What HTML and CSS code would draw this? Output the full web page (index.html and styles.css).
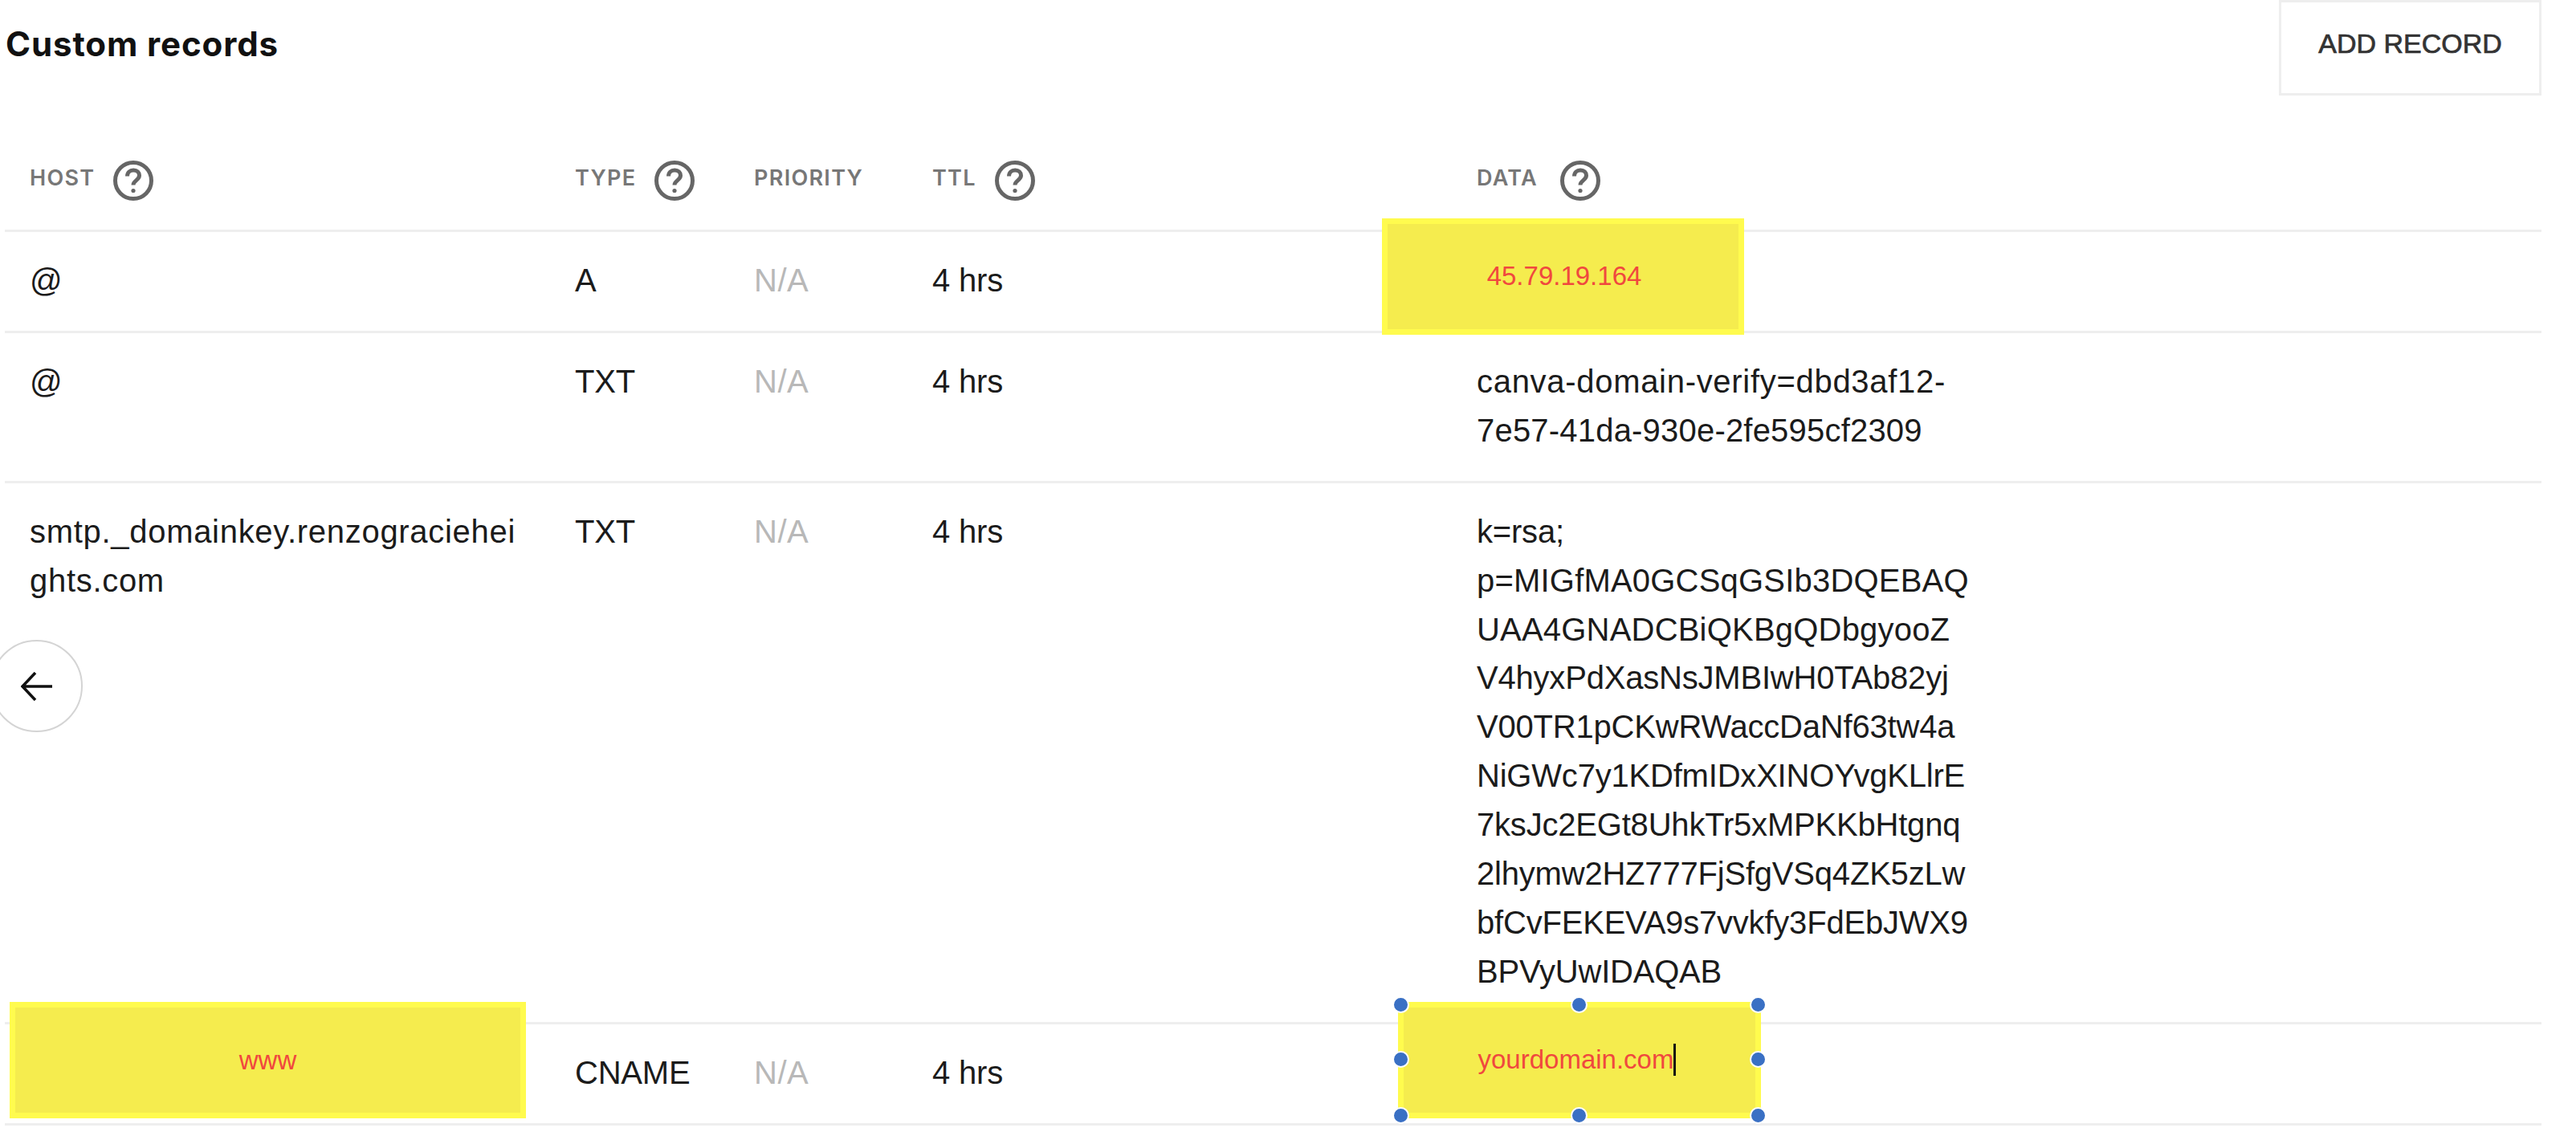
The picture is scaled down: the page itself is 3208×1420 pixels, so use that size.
FILE: index.html
```html
<!DOCTYPE html>
<html lang="en">
<head>
<meta charset="utf-8">
<title>Custom records</title>
<link rel="stylesheet" href="styles.css">
</head>
<body>
<main class="page">
  <header class="top">
    <h1 class="title">Custom records</h1>
    <button class="add">ADD RECORD</button>
  </header>
  <div class="table">
    <div class="row head">
      <div class="label">HOST <svg class="help" viewBox="0 0 50 50"><circle cx="25" cy="25" r="22.5"/><path d="M17.5 19.5c0-4.5 3.3-7.5 7.7-7.5s7.3 2.8 7.3 6.6c0 5.9-7.5 6.2-7.5 12"/><circle class="dot" cx="25" cy="37.5" r="2.6"/></svg></div>
      <div class="label">TYPE <svg class="help" viewBox="0 0 50 50"><circle cx="25" cy="25" r="22.5"/><path d="M17.5 19.5c0-4.5 3.3-7.5 7.7-7.5s7.3 2.8 7.3 6.6c0 5.9-7.5 6.2-7.5 12"/><circle class="dot" cx="25" cy="37.5" r="2.6"/></svg></div>
      <div class="label">PRIORITY</div>
      <div class="label">TTL <svg class="help" viewBox="0 0 50 50"><circle cx="25" cy="25" r="22.5"/><path d="M17.5 19.5c0-4.5 3.3-7.5 7.7-7.5s7.3 2.8 7.3 6.6c0 5.9-7.5 6.2-7.5 12"/><circle class="dot" cx="25" cy="37.5" r="2.6"/></svg></div>
      <div class="label label-data">DATA <svg class="help" viewBox="0 0 50 50"><circle cx="25" cy="25" r="22.5"/><path d="M17.5 19.5c0-4.5 3.3-7.5 7.7-7.5s7.3 2.8 7.3 6.6c0 5.9-7.5 6.2-7.5 12"/><circle class="dot" cx="25" cy="37.5" r="2.6"/></svg></div>
    </div>
    <div class="row">
      <div>@</div><div>A</div><div class="na">N/A</div><div>4 hrs</div><div></div>
    </div>
    <div class="row">
      <div>@</div><div>TXT</div><div class="na">N/A</div><div>4 hrs</div>
      <div><span class="loose">canva-domain-verify=dbd3af12-</span><br><span class="mid">7e57-41da-930e-2fe595cf2309</span></div>
    </div>
    <div class="row">
      <div class="loose">smtp._domainkey.renzograciehei<br>ghts.com</div><div>TXT</div><div class="na">N/A</div><div>4 hrs</div>
      <div>k=rsa;<br><span class="mid">p=MIGfMA0GCSqGSIb3DQEBAQ</span><br><span class="mid">UAA4GNADCBiQKBgQDbgyooZ</span><br>V4hyxPdXasNsJMBIwH0TAb82yj<br>V00TR1pCKwRWaccDaNf63tw4a<br>NiGWc7y1KDfmIDxXINOYvgKLlrE<br>7ksJc2EGt8UhkTr5xMPKKbHtgnq<br>2lhymw2HZ777FjSfgVSq4ZK5zLw<br>bfCvFEKEVA9s7vvkfy3FdEbJWX9<br>BPVyUwIDAQAB</div>
    </div>
    <div class="row">
      <div></div><div>CNAME</div><div class="na">N/A</div><div>4 hrs</div><div></div>
    </div>
  </div>

  <div class="mark mark-ip">45.79.19.164</div>
  <div class="mark mark-www">www</div>
  <div class="mark mark-domain">
    <span class="typed">yourdomain.com</span>
    <i class="handle h-tl"></i><i class="handle h-tm"></i><i class="handle h-tr"></i>
    <i class="handle h-ml"></i><i class="handle h-mr"></i>
    <i class="handle h-bl"></i><i class="handle h-bm"></i><i class="handle h-br"></i>
  </div>

  <button class="back" aria-label="Back">
    <svg viewBox="0 0 40 36" class="arrow"><path d="M39 18H2M18 1 2 18l16 17"/></svg>
  </button>
</main>
</body>
</html>
```

FILE: styles.css
```css
* { box-sizing: border-box; }
html, body { margin: 0; padding: 0; background: #fff; }
body { width: 3208px; height: 1420px; overflow: hidden; }
.page {
  position: relative;
  width: 3208px;
  height: 1420px;
  overflow: hidden;
  font-family: "Liberation Sans", Arial, sans-serif;
  color: #1b1b1b;
}
.top {
  display: flex;
  justify-content: space-between;
  align-items: flex-start;
  height: 118px;
  padding: 0 43px 0 7px;
}
.title {
  margin: 0;
  padding-top: 32px;
  font: 700 42px/46px Inter, sans-serif;
  color: #111;
  letter-spacing: 0.9px;
}
.add {
  width: 327px;
  height: 119px;
  margin: 0;
  padding: 0 0 12px;
  background: #fff;
  border: 3px solid #eeeeee;
  font: 400 34px/40px "Liberation Sans", sans-serif;
  -webkit-text-stroke: 0.7px #333;
  color: #333;
}
.table {
  width: 3159px;
  margin-left: 6px;
}
.row {
  display: grid;
  grid-template-columns: 679px 223px 222px 678px 1fr;
  padding: 30px 0 32px 31px;
  border-bottom: 3px solid #eeeeee;
  font-size: 40px;
  line-height: 60.9px;
  letter-spacing: -0.2px;
}
.row.head {
  height: 171px;
  padding: 80px 0 0 31px;
  line-height: 50px;
}
.loose { letter-spacing: 0.7px; }
.mid { letter-spacing: 0.2px; }
.label {
  display: flex;
  align-items: flex-start;
  gap: 23px;
  height: 50px;
  font: 600 27px/48px Inter, sans-serif;
  letter-spacing: 1.3px;
  color: #777;
}
.label-data { gap: 28px; }
.help { width: 50px; height: 50px; flex: none; margin-top: 2px; fill: none; stroke: #666; stroke-width: 5; }
.help .dot { fill: #666; stroke: none; }
.na { color: #b8b8b8; letter-spacing: 0.5px; }

.mark {
  position: absolute;
  display: flex;
  align-items: center;
  justify-content: center;
  height: 145px;
  background: #f5ec4e;
  border: 7px solid #fffb4e;
  color: #f0483e;
  font-size: 33px;
  line-height: 40px;
}
.mark-ip { left: 1721px; top: 272px; width: 451px; padding: 0 0 2px 3px; }
.mark-www { left: 12px; top: 1248px; width: 643px; }
.mark-domain { left: 1741px; top: 1248px; width: 452px; padding: 0 6px 2px 0; }
.typed { border-right: 3px solid #111; line-height: 40px; }
.handle {
  position: absolute;
  width: 21px;
  height: 21px;
  border-radius: 50%;
  background: #3a70c4;
  border: 2px solid #fff;
}
.h-tl { left: -14px; top: -14px; }
.h-tm { left: 208px; top: -14px; }
.h-tr { left: 431px; top: -14px; }
.h-ml { left: -14px; top: 54px; }
.h-mr { left: 431px; top: 54px; }
.h-bl { left: -14px; top: 124px; }
.h-bm { left: 208px; top: 124px; }
.h-br { left: 431px; top: 124px; }

.back {
  position: absolute;
  left: -12px;
  top: 797px;
  width: 115px;
  height: 115px;
  padding: 0;
  display: flex;
  align-items: center;
  justify-content: center;
  background: #fff;
  border: 2px solid #d4d4d4;
  border-radius: 50%;
}
.arrow { width: 40px; height: 36px; fill: none; stroke: #111; stroke-width: 3.5; }
```
